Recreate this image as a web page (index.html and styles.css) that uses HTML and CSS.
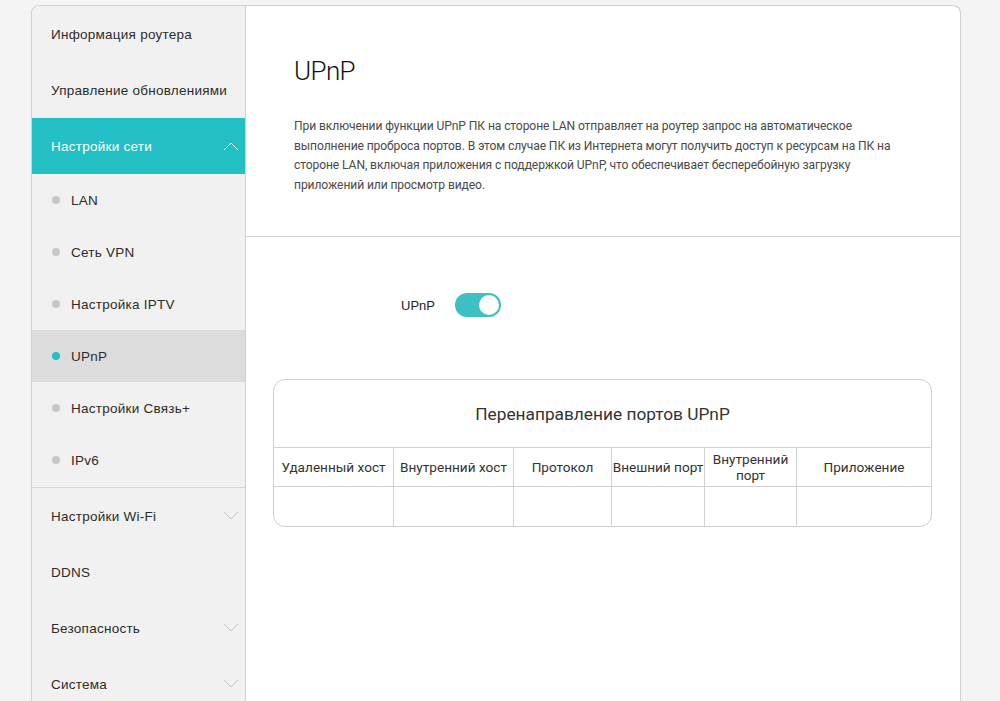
FILE: index.html
```html
<!DOCTYPE html>
<html lang="ru">
<head>
<meta charset="utf-8">
<link rel="stylesheet" href="styles.css">
</head>
<body>
<div class="frame">
  <nav class="sidebar">
    <div class="item">Информация роутера</div>
    <div class="item">Управление обновлениями</div>
    <div class="item active">Настройки сети
      <svg class="chev" width="16" height="10" viewBox="0 0 16 10"><path d="M1 9 L8 2 L15 9" fill="none" stroke="#ffffff" stroke-width="1"/></svg>
    </div>
    <div class="sub">
      <div class="subitem"><span class="dot"></span>LAN</div>
      <div class="subitem"><span class="dot"></span>Сеть VPN</div>
      <div class="subitem"><span class="dot"></span>Настройка IPTV</div>
      <div class="subitem current"><span class="dot"></span>UPnP</div>
      <div class="subitem"><span class="dot"></span>Настройки Связь+</div>
      <div class="subitem"><span class="dot"></span>IPv6</div>
    </div>
    <div class="item">Настройки Wi-Fi
      <svg class="chev" width="16" height="10" viewBox="0 0 16 10"><path d="M1 1 L8 8 L15 1" fill="none" stroke="#c8c8c8" stroke-width="1"/></svg>
    </div>
    <div class="item">DDNS</div>
    <div class="item">Безопасность
      <svg class="chev" width="16" height="10" viewBox="0 0 16 10"><path d="M1 1 L8 8 L15 1" fill="none" stroke="#c8c8c8" stroke-width="1"/></svg>
    </div>
    <div class="item">Система
      <svg class="chev" width="16" height="10" viewBox="0 0 16 10"><path d="M1 1 L8 8 L15 1" fill="none" stroke="#c8c8c8" stroke-width="1"/></svg>
    </div>
  </nav>
  <main class="main">
    <section class="head">
      <h1 class="title">UPnP</h1>
      <p class="desc">При включении функции UPnP ПК на стороне LAN отправляет на роутер запрос на автоматическое выполнение проброса портов. В этом случае ПК из Интернета могут получить доступ к ресурсам на ПК на стороне LAN, включая приложения с поддержкой UPnP, что обеспечивает бесперебойную загрузку приложений или просмотр видео.</p>
    </section>
    <section class="body">
      <div class="toggle-row">
        <span class="toggle-label">UPnP</span>
        <span class="toggle"><span class="knob"></span></span>
      </div>
      <div class="table-box">
        <div class="table-title">Перенаправление портов UPnP</div>
        <div class="grid">
          <div class="th c1">Удаленный хост</div>
          <div class="th c2">Внутренний хост</div>
          <div class="th c3">Протокол</div>
          <div class="th c4">Внешний порт</div>
          <div class="th c5">Внутренний<br>порт</div>
          <div class="th c6">Приложение</div>
          <div class="td c1"></div>
          <div class="td c2"></div>
          <div class="td c3"></div>
          <div class="td c4"></div>
          <div class="td c5"></div>
          <div class="td c6"></div>
        </div>
      </div>
    </section>
  </main>
</div>
</body>
</html>
```

FILE: styles.css
```css
* { box-sizing: border-box; }
html, body { margin: 0; padding: 0; }
body {
  background: #f4f4f4;
  font-family: "Liberation Sans", Arial, sans-serif;
  color: #222;
  height: 701px;
  overflow: hidden;
}
.frame {
  margin: 5px 0 0 31px;
  width: 930px;
  height: 720px;
  border: 1px solid #cfcfcf;
  border-bottom: none;
  border-radius: 8px 8px 0 0;
  display: flex;
  overflow: hidden;
  background: #fff;
}
.sidebar {
  width: 214px;
  flex: none;
  background: #f1f1f1;
  border-right: 1px solid #cfcfcf;
  display: flex;
  flex-direction: column;
}
.item {
  height: 56px;
  display: flex;
  align-items: center;
  justify-content: space-between;
  padding: 0 6px 0 19px;
  font-size: 13.5px;
  color: #2c2c2c;
  letter-spacing: 0.25px;
}
.item.active {
  background: #22c0c4;
  color: #fff;
}
.chev { flex: none; }
.sub {
  border-bottom: 1px solid #d4d4d4;
  padding-bottom: 1px;
}
.subitem {
  height: 52px;
  display: flex;
  align-items: center;
  padding-left: 20px;
  font-size: 13.5px;
  color: #2c2c2c;
  letter-spacing: 0.25px;
}
.subitem.current { background: #dcdcdc; }
.dot {
  width: 8px;
  height: 8px;
  border-radius: 50%;
  background: #c4c6c8;
  margin-right: 11px;
}
.subitem.current .dot { background: #22c0c4; }
.main {
  flex: 1;
  display: flex;
  flex-direction: column;
}
.head {
  height: 231px;
  border-bottom: 1px solid #d2d2d2;
  padding: 50px 48px 0 48px;
}
.title {
  margin: 0;
  font-family: Roboto, "Liberation Sans", sans-serif;
  font-weight: 300;
  font-size: 26px;
  color: #111;
  line-height: 30px;
  letter-spacing: -0.6px;
}
.desc {
  margin: 31px 0 0 0;
  width: 600px;
  font-family: Roboto, "Liberation Sans", sans-serif;
  font-size: 12.1px;
  line-height: 19.7px;
  color: #4a4a4a;
  letter-spacing: -0.1px;
}
.body {
  padding: 56px 28px 0 27px;
}
.toggle-row {
  display: flex;
  align-items: center;
  padding-left: 128px;
  height: 24px;
}
.toggle-label {
  font-size: 13px;
  color: #222;
  width: 54px;
}
.toggle {
  width: 46px;
  height: 24px;
  border-radius: 12px;
  background: #3ebfc3;
  display: flex;
  align-items: center;
  justify-content: flex-end;
  padding-right: 2px;
}
.knob {
  width: 20px;
  height: 20px;
  border-radius: 50%;
  background: #fff;
}
.table-box {
  margin-top: 62px;
  width: 659px;
  border: 1px solid #cfcfcf;
  border-radius: 12px;
  overflow: hidden;
}
.table-title {
  height: 68px;
  display: flex;
  align-items: center;
  justify-content: center;
  font-family: Roboto, "Liberation Sans", sans-serif;
  font-size: 17.3px;
  color: #333;
  border-bottom: 1px solid #d2d2d2;
}
.grid {
  display: grid;
  grid-template-columns: 120px 120px 98px 93px 92px 1fr;
  grid-template-rows: 39px 39px;
}
.th, .td {
  border-right: 1px solid #d2d2d2;
  display: flex;
  align-items: center;
  justify-content: center;
  text-align: center;
  font-family: Roboto, "Liberation Sans", sans-serif;
  font-size: 13.6px;
  line-height: 16px;
  color: #333;
}
.th { border-bottom: 1px solid #d2d2d2; white-space: nowrap; }
.c6 { border-right: none; }
```
